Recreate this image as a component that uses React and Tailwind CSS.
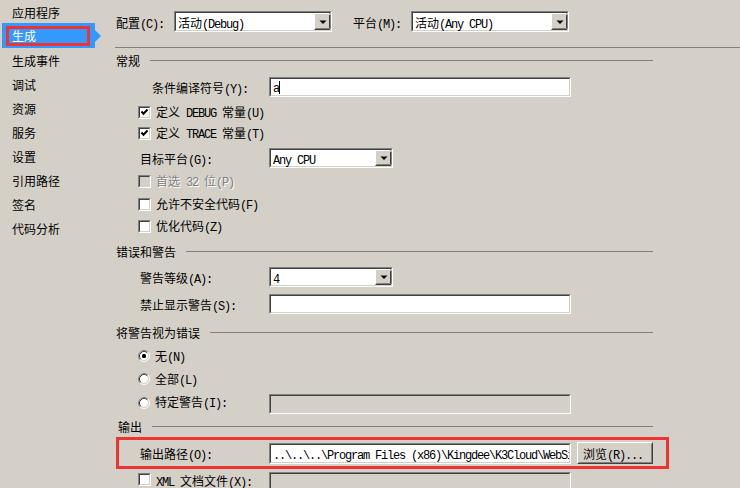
import React from "react";

const CJK = /[\u3000-\u9fff\uff00-\uffef]/;

// mixed label: CJK runs in Noto, latin runs in a narrow mono
function T({ s, className = "" }) {
  const parts = s.match(/[\u3000-\u9fff\uff00-\uffef]+|[^\u3000-\u9fff\uff00-\uffef]+/g) || [];
  return (
    <span className={"whitespace-pre leading-[14px] " + className}>
      {parts.map((p, i) =>
        CJK.test(p) ? (
          <span key={i} className="font-['Noto_Sans_CJK_SC',sans-serif] text-[12px]">
            {p}
          </span>
        ) : (
          <span key={i} className="font-['Liberation_Mono',monospace] text-[12px] tracking-[-1.2px]">
            {p}
          </span>
        )
      )}
    </span>
  );
}

function Sunken({ className = "", innerClass = "bg-white", children }) {
  return (
    <div className={"flex shrink-0 border border-t-[#808080] border-l-[#808080] border-b-white border-r-white " + className}>
      <div className={"flex flex-1 min-w-0 items-center border border-t-[#404040] border-l-[#404040] border-b-[#d4d0c8] border-r-[#d4d0c8] " + innerClass}>
        {children}
      </div>
    </div>
  );
}

function Raised({ className = "", children }) {
  return (
    <div className={"flex shrink-0 border border-t-white border-l-white border-b-[#404040] border-r-[#404040] bg-[#d4d0c8] " + className}>
      <div className="flex flex-1 items-center border border-t-[#d4d0c8] border-l-[#d4d0c8] border-b-[#808080] border-r-[#808080]">
        {children}
      </div>
    </div>
  );
}

function Select({ className, value }) {
  return (
    <Sunken className={className}>
      <div className="flex-1 min-w-0 pl-[2px] overflow-hidden">
        <T s={value} />
      </div>
      <Raised className="w-[16px] h-full">
        <svg width="14" height="14" viewBox="0 0 14 14" className="mx-auto">
          <path d="M3.5 5.5 H10.5 L7 9 Z" fill="black" />
        </svg>
      </Raised>
    </Sunken>
  );
}

function Check({ checked, disabled }) {
  return (
    <Sunken className="w-[13px] h-[13px]" innerClass={disabled ? "bg-[#d4d0c8]" : "bg-white"}>
      {checked && (
        <svg width="9" height="9" viewBox="0 0 9 9">
          <path d="M1.5 3.5 L3.5 5.8 L7.5 1.5" stroke="black" strokeWidth="2" fill="none" />
        </svg>
      )}
    </Sunken>
  );
}

function Radio({ checked }) {
  return (
    <svg width="12" height="12" viewBox="0 0 12 12" className="shrink-0">
      <circle cx="6" cy="6" r="4.5" fill="white" />
      <path d="M2.11 9.89 A5.5 5.5 0 0 1 9.89 2.11" stroke="#808080" fill="none" />
      <path d="M9.89 2.11 A5.5 5.5 0 0 1 2.11 9.89" stroke="white" fill="none" />
      <path d="M2.82 9.18 A4.5 4.5 0 0 1 9.18 2.82" stroke="#404040" fill="none" />
      <path d="M9.18 2.82 A4.5 4.5 0 0 1 2.82 9.18" stroke="#d4d0c8" fill="none" />
      {checked && <rect x="4" y="4" width="4" height="4" rx="1.5" fill="black" />}
    </svg>
  );
}

function Header({ s, h, ml = "ml-px" }) {
  return (
    <div className={"flex items-center " + h}>
      <T s={s} className={ml} />
      <div className="ml-[10px] flex-1 h-px bg-[#808080]" />
    </div>
  );
}

const navItems = ["应用程序", "生成", "生成事件", "调试", "资源", "服务", "设置", "引用路径", "签名", "代码分析"];

export default function App() {
  return (
    <div className="w-[740px] h-[488px] overflow-hidden bg-[#d4d0c8] text-black flex">
      <nav className="w-[115px] shrink-0">
        {navItems.map((it, i) =>
          i === 1 ? (
            <div key={it} className="flex items-center h-6">
              <div className="ml-[2px] w-[93px] h-[25px] -mt-px bg-[#3399ff] flex items-center">
                <div className="ml-[4px] w-[84px] h-[20px] border-[3px] border-[#ee3333] flex items-center pl-[3px] text-white">
                  <T s={it} />
                </div>
              </div>
              <svg width="7" height="12" viewBox="0 0 7 12" className="-mt-px">
                <path d="M0 0 L6 6 L0 12 Z" fill="#3399ff" />
              </svg>
            </div>
          ) : (
            <div key={it} className="flex items-center h-6 pl-[12px]">
              <T s={it} />
            </div>
          )
        )}
      </nav>

      <main className="flex-1 min-w-0">
        <div className="h-[47px] pt-[11px] flex items-start">
          <div className="flex items-center h-[21px]">
            <div className="ml-px w-[58px]">
              <T s="配置(C):" />
            </div>
            <Select className="w-[158px] h-[21px]" value="活动(Debug)" />
            <div className="ml-[21px] w-[58px]">
              <T s="平台(M):" />
            </div>
            <Select className="w-[158px] h-[21px]" value="活动(Any CPU)" />
          </div>
        </div>
        <div className="h-px bg-[#808080]" />

        <div className="w-[538px]">
          <Header s="常规" h="h-[24px]" />

          <div className="flex items-center h-[30px]">
            <div className="ml-[37px] w-[117px]">
              <T s="条件编译符号(Y):" />
            </div>
            <Sunken className="w-[302px] h-[20px]">
              <div className="pl-[2px] flex items-center">
                <T s="a" />
                <span className="w-px h-[13px] bg-black" />
              </div>
            </Sunken>
          </div>

          <div className="flex items-center h-[20px] pl-[23px] gap-[5px]">
            <Check checked />
            <T s="定义 DEBUG 常量(U)" />
          </div>
          <div className="flex items-center h-[22px] pl-[23px] gap-[5px]">
            <Check checked />
            <T s="定义 TRACE 常量(T)" />
          </div>

          <div className="flex items-center h-[28px]">
            <div className="ml-[25px] w-[129px]">
              <T s="目标平台(G):" />
            </div>
            <Select className="w-[124px] h-[20px]" value="Any CPU" />
          </div>

          <div className="flex items-center h-[18px] pl-[23px] gap-[5px]">
            <Check disabled />
            <T s="首选 32 位(P)" className="text-[#808080] [text-shadow:1px_1px_0_#fff]" />
          </div>
          <div className="flex items-center h-[28px] pl-[23px] gap-[5px]">
            <Check />
            <T s="允许不安全代码(F)" />
          </div>
          <div className="flex items-center h-[16px] pl-[23px] gap-[5px]">
            <Check />
            <T s="优化代码(Z)" />
          </div>

          <Header s="错误和警告" h="h-[34px]" />

          <div className="flex items-center h-[18px]">
            <div className="ml-[25px] w-[129px]">
              <T s="警告等级(A):" />
            </div>
            <Select className="w-[124px] h-[20px]" value="4" />
          </div>

          <div className="flex items-center h-[36px]">
            <div className="ml-[25px] w-[129px]">
              <T s="禁止显示警告(S):" />
            </div>
            <Sunken className="w-[302px] h-[20px]" />
          </div>

          <Header s="将警告视为错误" h="h-[20px]" />

          <div className="flex items-center h-[28px] pl-[23px] gap-[5px]">
            <Radio checked />
            <T s="无(N)" />
          </div>
          <div className="flex items-center h-[18px] pl-[23px] gap-[5px]">
            <Radio />
            <T s="全部(L)" />
          </div>
          <div className="flex items-start h-[26px]">
            <div className="mt-[6px] ml-[23px] w-[131px] flex items-center gap-[5px]">
              <Radio />
              <T s="特定警告(I):" />
            </div>
            <Sunken className="mt-[6px] w-[302px] h-[20px]" innerClass="bg-[#d4d0c8]" />
          </div>

          <Header s="输出" h="h-[24px]" ml="ml-[3px]" />
        </div>

        <div className="-mt-px ml-px w-[553px] h-[32px] border-[3px] border-[#ee3333] flex items-center">
          <div className="ml-[21px] w-[129px] shrink-0">
            <T s="输出路径(O):" />
          </div>
          <Sunken className="w-[302px] h-[21px]">
            <div className="flex-1 min-w-0 pl-[2px] whitespace-nowrap overflow-hidden">
              <T s={"..\\..\\..\\Program Files (x86)\\Kingdee\\K3Cloud\\WebSite\\bin"} />
            </div>
          </Sunken>
          <Raised className="ml-[6px] w-[76px] h-[22px]">
            <div className="pl-[4px]">
              <T s="浏览(R)..." />
            </div>
          </Raised>
        </div>

        <div className="flex items-start h-[30px]">
          <div className="mt-[4px] ml-[23px] w-[131px] flex items-start gap-[5px]">
            <Check />
            <T s="XML 文档文件(X):" />
          </div>
          <Sunken className="mt-[3px] w-[302px] h-[20px]" innerClass="bg-[#d4d0c8]" />
        </div>
      </main>
    </div>
  );
}
